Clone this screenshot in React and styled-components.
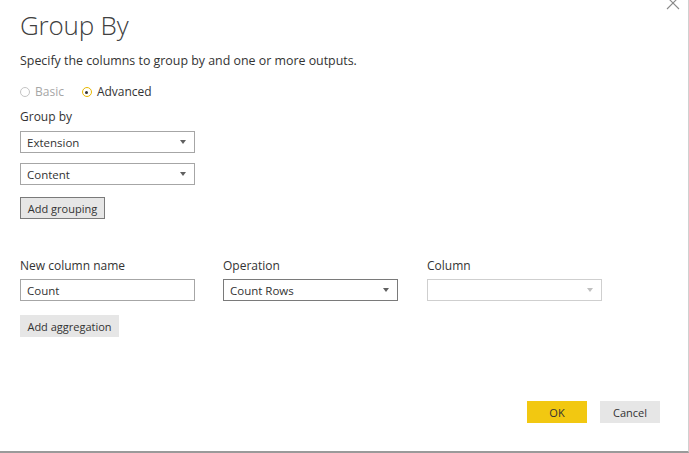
import React from "react";
import styled, { createGlobalStyle } from "styled-components";

const Global = createGlobalStyle`
  html, body {
    margin: 0;
    padding: 0;
    background: #ffffff;
  }
  body {
    font-family: "Open Sans", "Noto Sans", sans-serif;
    color: #333333;
  }
`;

const Dialog = styled.div`
  position: relative;
  box-sizing: border-box;
  width: 689px;
  height: 453px;
  padding: 8px 20px 0 20px;
  border-bottom: 2px solid #9a9a9a;
  border-right: 1px solid #d0d0d0;
  display: flex;
  flex-direction: column;
  overflow: hidden;
`;

const Close = styled.button`
  position: absolute;
  top: -4px;
  right: 8px;
  width: 14px;
  height: 14px;
  padding: 0;
  border: none;
  background: none;
  display: flex;
`;

const Title = styled.h1`
  margin: 0;
  font-size: 26px;
  font-weight: 300;
  color: #404040;
  line-height: 34px;
  letter-spacing: -0.2px;
`;

const Subtitle = styled.p`
  margin: 10px 0 0 0;
  font-size: 12.4px;
  line-height: 18px;
  color: #333;
`;

const RadioRow = styled.div`
  display: flex;
  gap: 18px;
  margin-top: 14px;
  font-size: 12px;
  line-height: 16px;
`;

const RadioItem = styled.label`
  display: flex;
  align-items: center;
  gap: 5px;
  color: ${(p) => (p.$disabled ? "#a6a6a6" : "#333")};
`;

const RadioDot = styled.span`
  box-sizing: border-box;
  width: 10px;
  height: 10px;
  border-radius: 50%;
  border: 1.5px solid ${(p) => (p.$checked ? "#e8b800" : "#c4c4c4")};
  display: flex;
  align-items: center;
  justify-content: center;
  &::after {
    content: "";
    display: ${(p) => (p.$checked ? "block" : "none")};
    width: 3px;
    height: 3px;
    border-radius: 50%;
    background: #333;
  }
`;

const Label = styled.div`
  font-size: 12px;
  line-height: 16px;
  color: #333;
  margin-top: ${(p) => p.$top || 0}px;
`;

const Field = styled.div`
  box-sizing: border-box;
  width: 175px;
  height: 22px;
  border: 1px solid ${(p) => p.$border || "#a6a6a6"};
  display: flex;
  align-items: center;
  justify-content: space-between;
  padding: 0 8px 0 6px;
  font-size: 11.5px;
  color: #333;
  margin-top: ${(p) => p.$top || 0}px;
  background: #fff;
`;

const Caret = styled.span`
  width: 0;
  height: 0;
  border-left: 3.5px solid transparent;
  border-right: 3.5px solid transparent;
  border-top: 4px solid ${(p) => p.$color || "#606060"};
`;

const Button = styled.button`
  box-sizing: border-box;
  height: 22px;
  padding: 0;
  font-family: inherit;
  font-size: 11px;
  white-space: nowrap;
  color: #333;
  background: ${(p) => p.$bg || "#e6e6e6"};
  border: ${(p) => (p.$outline ? "1px solid #7a7a7a" : "none")};
  width: ${(p) => p.$width}px;
  align-self: flex-start;
  margin-top: ${(p) => p.$top || 0}px;
  cursor: pointer;
`;

const AggGrid = styled.div`
  display: grid;
  grid-template-columns: 203px 204px 175px;
  row-gap: 5px;
  margin-top: 39px;
  align-items: center;
`;

const Footer = styled.div`
  display: flex;
  justify-content: flex-end;
  gap: 13px;
  margin-top: auto;
  margin-bottom: 28px;
  padding-right: 8px;
`;

function Select({ value, top, border, caret }) {
  return (
    <Field $top={top} $border={border}>
      <span>{value}</span>
      <Caret $color={caret} />
    </Field>
  );
}

export default function App() {
  return (
    <>
      <Global />
      <Dialog>
        <Close aria-label="Close">
          <svg width="14" height="14" viewBox="0 0 14 14">
            <path d="M1 1 L13 13 M13 1 L1 13" stroke="#8a8a8a" strokeWidth="1.1" fill="none" />
          </svg>
        </Close>
        <Title>Group By</Title>
        <Subtitle>Specify the columns to group by and one or more outputs.</Subtitle>
        <RadioRow>
          <RadioItem $disabled>
            <RadioDot />
            Basic
          </RadioItem>
          <RadioItem>
            <RadioDot $checked />
            Advanced
          </RadioItem>
        </RadioRow>
        <Label $top={9}>Group by</Label>
        <Select value="Extension" top={6} />
        <Select value="Content" top={10} />
        <Button $outline $top={12} $width={85}>Add grouping</Button>
        <AggGrid>
          <Label>New column name</Label>
          <Label>Operation</Label>
          <Label>Column</Label>
          <Field>Count</Field>
          <Select value="Count Rows" border="#7a7a7a" />
          <Select value="" border="#cfcfcf" caret="#c0c0c0" />
        </AggGrid>
        <Button $top={14} $width={99}>Add aggregation</Button>
        <Footer>
          <Button $bg="#f2c811" $width={60}>OK</Button>
          <Button $width={60}>Cancel</Button>
        </Footer>
      </Dialog>
    </>
  );
}
